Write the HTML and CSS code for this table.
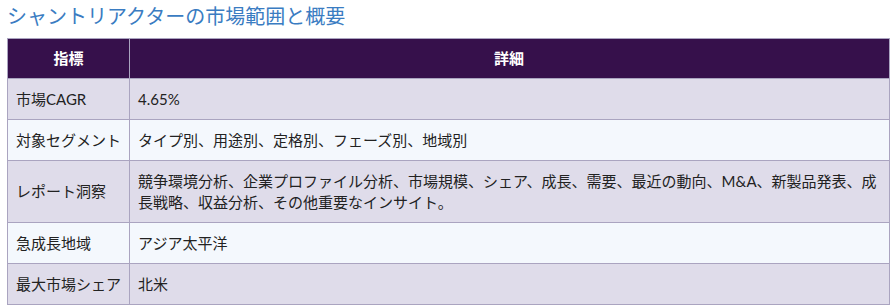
FILE: index.html
```html
<!DOCTYPE html>
<html lang="ja">
<head>
<meta charset="utf-8">
<link rel="stylesheet" href="styles.css">
</head>
<body>
<h2 class="title">シャントリアクターの市場範囲と概要</h2>
<table class="overview">
  <thead>
    <tr><th class="col-key">指標</th><th>詳細</th></tr>
  </thead>
  <tbody>
    <tr><td class="key">市場CAGR</td><td>4.65%</td></tr>
    <tr><td class="key">対象セグメント</td><td>タイプ別、用途別、定格別、フェーズ別、地域別</td></tr>
    <tr><td class="key">レポート洞察</td><td>競争環境分析、企業プロファイル分析、市場規模、シェア、成長、需要、最近の動向、M&amp;A、新製品発表、成長戦略、収益分析、その他重要なインサイト。</td></tr>
    <tr><td class="key">急成長地域</td><td>アジア太平洋</td></tr>
    <tr><td class="key">最大市場シェア</td><td>北米</td></tr>
  </tbody>
</table>
</body>
</html>
```
FILE: styles.css
```css
html, body {
  margin: 0;
  padding: 0;
  background: #ffffff;
}
body {
  padding: 0 6px 0 7px;
  font-family: "Lato", "Noto Sans CJK JP", sans-serif;
  color: #222222;
}
.title {
  margin: 0;
  padding-top: 3px;
  height: 38px;
  box-sizing: border-box;
  font-size: 20px;
  line-height: 26px;
  font-weight: normal;
  color: #3a7cc2;
}
.overview {
  width: 883px;
  border-collapse: collapse;
  font-size: 15px;
  line-height: 21px;
  table-layout: fixed;
}
.overview th,
.overview td {
  border: 1px solid #aaa4c0;
  padding: 9.5px 9px 9.5px 8px;
  text-align: left;
  vertical-align: middle;
}
.overview th {
  background: #36104b;
  color: #ffffff;
  font-weight: bold;
  text-align: center;
  padding-top: 9px;
  padding-bottom: 9px;
}
.overview .col-key {
  width: 105px;
  padding-left: 8px;
  padding-right: 8px;
}
.overview .key {
  white-space: nowrap;
}
.overview tbody tr:nth-child(odd) td {
  background: #dfdcea;
}
.overview tbody tr:nth-child(even) td {
  background: #f4f8fd;
}
```
